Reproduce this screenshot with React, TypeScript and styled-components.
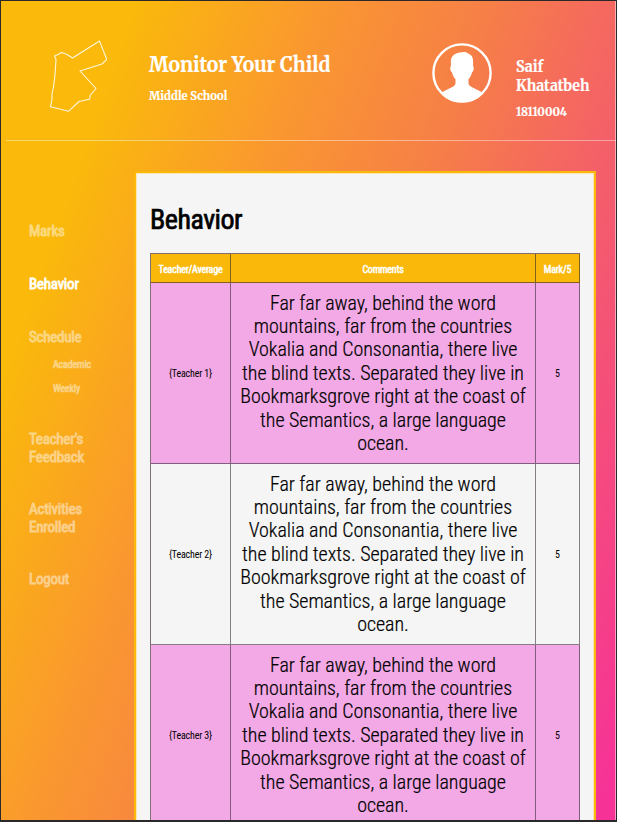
import React from "react";
import styled, { createGlobalStyle } from "styled-components";

const GlobalStyle = createGlobalStyle`
  * { box-sizing: border-box; }
  body {
    margin: 0;
    overflow: hidden;
    font-family: "Roboto Condensed", Roboto, sans-serif;
    font-stretch: 75%;
  }
  h1, h2, p { margin: 0; padding: 0; }
`;

const Page = styled.div`
  display: flex;
  flex-direction: column;
  width: 617px;
  height: 822px;
  overflow: hidden;
  border: 1px solid #2b2829;
  border-bottom-width: 2px;
  background: linear-gradient(109.5deg, #fab90b 15%, #fa9730 36%, #f67f47 54%, #f45d6b 74%, #f63297 98%);
  box-shadow: inset -1px 0 0 rgba(255, 255, 255, 0.5);
`;

const Header = styled.header`
  display: flex;
  flex: none;
  height: 140px;
  margin-left: 5px;
  border-bottom: 1px solid rgba(255, 255, 255, 0.42);
  color: #fff;
  font-family: Merriweather, "DejaVu Serif", serif;
  font-weight: 700;
`;

const CountryMap = styled.svg`
  flex: none;
  width: 62px;
  height: 80px;
  margin: 36px 42px 0 39px;
`;

const Titles = styled.div`
  width: 283px;
  padding-top: 49px;
`;

const Line = styled.p<{ $size: number; $height: number; $scale: number; $gap?: number }>`
  font-size: ${(p) => p.$size}px;
  line-height: ${(p) => p.$height}px;
  margin-top: ${(p) => p.$gap ?? 0}px;
  transform: scaleX(${(p) => p.$scale});
  transform-origin: left;
  white-space: nowrap;
  -webkit-text-stroke: 0.2px #fff;
`;

const Avatar = styled.svg`
  flex: none;
  width: 60px;
  height: 60px;
  margin: 42px 24px 0 0;
`;

const Account = styled.div`
  padding-top: 56px;
`;

const Body = styled.div`
  display: flex;
  flex: 1;
  min-height: 0;
`;

const Nav = styled.nav`
  flex: none;
  width: 133px;
  padding: 81px 40px 0 28px;
`;

const NavItem = styled.a<{ $active?: boolean; $gap?: number }>`
  display: block;
  margin-bottom: ${(p) => p.$gap ?? 35}px;
  color: #fff;
  opacity: ${(p) => (p.$active ? 1 : 0.48)};
  font-size: 15px;
  line-height: 18px;
  font-weight: 400;
  letter-spacing: -0.22px;
  -webkit-text-stroke: 0.8px currentColor;
`;

const SubItem = styled(NavItem)`
  margin: 0 0 0 24px;
  font-size: 10px;
  line-height: 24px;
  letter-spacing: -0.15px;
  -webkit-text-stroke-width: 0.6px;
`;

const SubMenu = styled.div`
  margin: 7px 0 29px;
`;

const Panel = styled.main`
  width: 462px;
  height: 700px;
  margin-top: 30px;
  padding: 28px 14px 0;
  border: 2px solid #fcb90b;
  box-shadow: inset 0 0 0 1px #fae5b5;
  background: #f5f5f5;
`;

const Heading = styled.h1`
  height: 52px;
  font-size: 28px;
  line-height: 38px;
  font-weight: 400;
  letter-spacing: -0.5px;
  -webkit-text-stroke: 0.7px #000;
  color: #000;
`;

const Table = styled.table`
  width: 430px;
  table-layout: fixed;
  border-collapse: separate;
  border-spacing: 0;
  border: solid #806e71;
  border-width: 1px 0 0 1px;
  text-align: center;
`;

const Col = styled.col<{ $width: number }>`
  width: ${(p) => p.$width}px;
`;

const HeadCell = styled.th`
  height: 29px;
  padding: 2px 0 0;
  border: solid rgba(65, 50, 45, 0.65);
  border-width: 0 1px 1px 0;
  background: #fab80a;
  color: #fff;
  font-size: 10px;
  font-weight: 400;
  letter-spacing: -0.2px;
  -webkit-text-stroke: 0.5px #fff;
`;

const Row = styled.tr<{ $tinted: boolean }>`
  background: ${(p) => (p.$tinted ? "#f3a9e5" : "#f5f5f5")};
`;

const Cell = styled.td<{ $large?: boolean }>`
  height: 181px;
  padding: 1px 8px 0;
  border: solid rgba(40, 30, 40, 0.55);
  border-width: 0 1px 1px 0;
  color: #000;
  font-size: ${(p) => (p.$large ? 20 : 10)}px;
  font-weight: ${(p) => (p.$large ? 300 : 400)};
  letter-spacing: ${(p) => (p.$large ? "-0.04px" : "-0.15px")};
  line-height: ${(p) => (p.$large ? "23.4px" : "12px")};
  -webkit-text-stroke: ${(p) => (p.$large ? "0.2px #000" : "0")};
`;

const comment =
  "Far far away, behind the word mountains, far from the countries Vokalia and Consonantia, there live the blind texts. Separated they live in Bookmarksgrove right at the coast of the Semantics, a large language ocean.";

const rows = [
  { teacher: "{Teacher 1}", mark: 5 },
  { teacher: "{Teacher 2}", mark: 5 },
  { teacher: "{Teacher 3}", mark: 5 },
];

export default function App() {
  return (
    <>
      <GlobalStyle />
      <Page>
        <Header>
          <CountryMap viewBox="45 37 62 80" fill="none" stroke="#fff6dc" strokeWidth="1.1" strokeLinejoin="round">
            <path d="M99.5 41 106.8 59.5 102 64 80 71 96 88.5 90.5 95 89.5 99.3 79 101.5 68.5 111.3 50.5 106.8 52 99 52 94 53.5 87 55 75 56 59.5 54.5 56 58 54.5 61.5 52.5 66 54 72.5 58Z" />
          </CountryMap>
          <Titles>
            <Line as="h2" $size={20} $height={30} $scale={0.965}>Monitor Your Child</Line>
            <Line $size={12} $height={18} $scale={0.93} $gap={7}>Middle School</Line>
          </Titles>
          <Avatar viewBox="0 0 60 60">
            <circle cx="30" cy="30" r="28.6" fill="none" stroke="#fff" strokeWidth="2.4" />
            <path
              fill="#fff"
              d="M30 9.2c3-.5 5.200.2 6.500 1.500 3 .8 4.600 3.500 4.600 7.500v5c1.300 1.200.9 4.700-1.200 6.300-.5 2.800-1.500 4.500-3.400 6.800v4.500c1.200 4.200 10.500 5.600 14.700 9.500C46 56.500 38.500 59.500 30 59.500S14 56.500 8.800 50.300c4.200-3.900 13.500-5.300 14.700-9.500v-4.500c-1.900-2.300-2.900-4-3.400-6.800-2.100-1.600-2.500-5.100-1.200-6.300v-5c0-5.500 4.600-9 11.100-9Z"
            />
          </Avatar>
          <Account>
            <Line $size={15} $height={19} $scale={0.951}>Saif</Line>
            <Line $size={15} $height={19} $scale={0.951}>Khatatbeh</Line>
            <Line $size={12} $height={18} $scale={0.945} $gap={8}>18110004</Line>
          </Account>
        </Header>
        <Body>
          <Nav>
            <NavItem>Marks</NavItem>
            <NavItem $active>Behavior</NavItem>
            <NavItem $gap={0}>Schedule</NavItem>
            <SubMenu>
              <SubItem>Academic</SubItem>
              <SubItem>Weekly</SubItem>
            </SubMenu>
            <NavItem $gap={34}>Teacher's Feedback</NavItem>
            <NavItem $gap={34}>Activities Enrolled</NavItem>
            <NavItem>Logout</NavItem>
          </Nav>
          <Panel>
            <Heading>Behavior</Heading>
            <Table>
              <colgroup>
                <Col $width={80} />
                <Col $width={305} />
                <Col $width={44} />
              </colgroup>
              <thead>
                <tr>
                  <HeadCell>Teacher/Average</HeadCell>
                  <HeadCell>Comments</HeadCell>
                  <HeadCell>Mark/5</HeadCell>
                </tr>
              </thead>
              <tbody>
                {rows.map((row, i) => (
                  <Row key={row.teacher} $tinted={i % 2 === 0}>
                    <Cell>{row.teacher}</Cell>
                    <Cell $large>{comment}</Cell>
                    <Cell>{row.mark}</Cell>
                  </Row>
                ))}
              </tbody>
            </Table>
          </Panel>
        </Body>
      </Page>
    </>
  );
}
